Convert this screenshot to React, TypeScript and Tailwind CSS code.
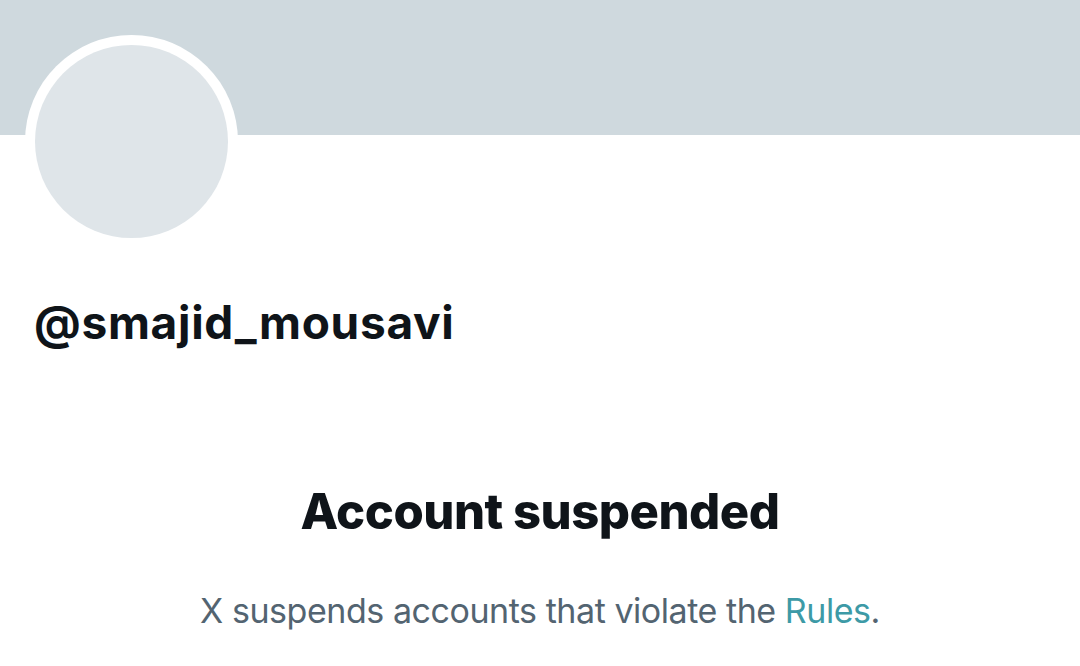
export default function App() {
  return (
    <div className="w-[1080px] h-[666px] bg-white overflow-hidden" style={{ fontFamily: "Inter, 'Noto Sans', sans-serif" }}>
      <div className="h-[135px] bg-[#cfd9de]" />
      <div className="pl-[25px] -mt-[100px]">
        <div className="w-[213px] h-[213px] rounded-full bg-white p-[10px]">
          <div className="w-full h-full rounded-full bg-[#dfe5e9]" />
        </div>
      </div>
      <div className="pl-[34px] mt-[44px] text-[46px] leading-[60px] font-bold text-[#0f1419] tracking-[0.7px]">
        @smajid_mousavi
      </div>
      <div className="mt-[130px] flex flex-col items-center">
        <div className="text-[49px] leading-[60px] font-extrabold text-[#0f1419] tracking-[-0.5px]">Account suspended</div>
        <div className="mt-[47px] text-[34px] leading-[44px] text-[#536471] tracking-[-0.45px]">
          X suspends accounts that violate the <span className="text-[#3d9aa6]">Rules</span>.
        </div>
      </div>
    </div>
  );
}
